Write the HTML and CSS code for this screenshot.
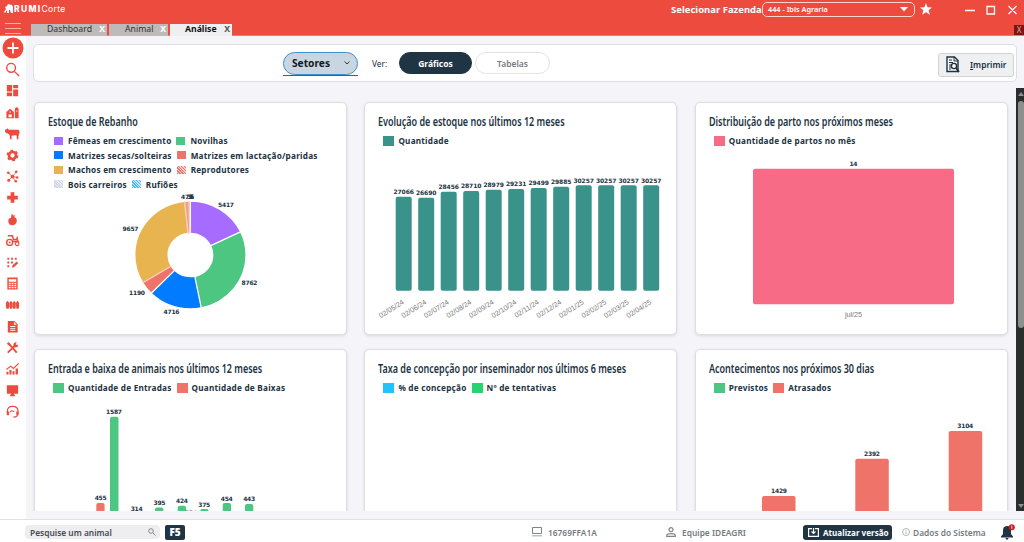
FILE: index.html
```html
<!DOCTYPE html>
<html lang="pt-BR">
<head>
	<meta charset="utf-8">
	<title>Rumi Corte - Análise</title>
	<link rel="stylesheet" href="styles.css">
</head>
<body>
<header class="topbar">
	<div class="titlebar">
		<div class="brand">
			<svg width="10" height="9" viewBox="0 0 10 9"><path d="M0 8L2 5 1 3 3 2 4 0 8 1 9 3 9 9 7 9 6 6 5 6 5 9 3 9 3 6 1 9Z" fill="#fff"/></svg>
			<b>RUMI</b><span>Corte</span>
		</div>
		<div class="farm">
			<b>Selecionar Fazenda</b>
			<div class="farm-select"><span>444 - Ibis Agraria</span><svg width="8" height="5"><path d="M0 0H8L4 4.500Z" fill="#fff"/></svg></div>
			<svg width="12" height="12" viewBox="0 0 12 12"><path d="M6 0L7.600 4.200 12 4.500 8.600 7.300 9.800 11.700 6 9.200 2.200 11.700 3.400 7.300 0 4.500 4.400 4.200Z" fill="#fff"/></svg>
		</div>
		<svg class="window-buttons" width="54" height="12" viewBox="0 0 54 12" fill="none" stroke="#fff" stroke-width="1.300"><path d="M0 6.500H10M22 2.500h7.500v7.500H22ZM43.500 2l8 8M51.500 2l-8 8"/></svg>
	</div>
	<div class="tabbar">
		<svg class="burger" width="16" height="12" viewBox="0 0 16 12" stroke="#ffb0a6" stroke-width="1"><path d="M0 .5H16M0 5.500H16M0 10.500H16"/></svg>
		<div class="tab tab-dash"><span>Dashboard</span><i>X</i></div>
		<div class="tab tab-animal"><span>Animal</span><i>X</i></div>
		<div class="tab tab-active"><span>Análise</span><i>X</i></div>
		<div class="close-all">X</div>
	</div>
</header>

<div class="main">
	<nav class="sidebar">
		<svg class="add" viewBox="0 0 22 22"><circle cx="11" cy="11" r="10.500"/><path d="M11 5.500v11M5.500 11h11" stroke="#fff" stroke-width="1.800"/></svg>
		<svg viewBox="0 0 16 16" class="line"><circle cx="6.500" cy="6.200" r="4.700"/><path d="M10 10l5 5"/></svg>
		<svg viewBox="0 0 16 16"><path d="M2 2h5.500v7H2zM8.700 2h5.300v3.500H8.700zM2 10.200h5.500V14H2zM8.700 6.800h5.300V14H8.700z"/></svg>
		<!-- barn -->
		<svg viewBox="0 0 16 16"><path fill-rule="evenodd" d="M1.500 7.500L5.500 4 9.500 7.500V14H1.500ZM3.800 10h3.400v3H3.800ZM4.700 7h1.600v1H4.700ZM10.500 4q2-3 4 0V14H10.500ZM11.800 6v1h1.500V6Z"/></svg>
		<!-- cow -->
		<svg viewBox="0 0 16 16"><path d="M0 4L1.500 3.500 2.500 2.500 4 4H14.500Q16 5 15.700 9L15 7 14.800 10 14.300 10.500V14H12.500V10.500L11 9.800 7 10.300V14H5.200V10.500L4 8.500 1.500 7.500 0 6Z"/></svg>
		<!-- gear -->
		<svg viewBox="0 0 16 16"><circle cx="8" cy="8" r="3.700" fill="none" stroke="#ed4b3e" stroke-width="2.800"/><circle cx="8" cy="8" r="5.400" fill="none" stroke="#ed4b3e" stroke-width="1.700" stroke-dasharray="2.900 2.755"/></svg>
		<!-- links -->
		<svg viewBox="0 0 16 16"><path d="M8 8L3.500 4M8 8l4-5M8 8l5 1M8 8l3 5M8 8l-4 4" stroke="#ed4b3e" stroke-width=".8"/><circle cx="8" cy="8" r="2"/><circle cx="3.500" cy="4" r="1.400"/><circle cx="12" cy="3" r="1.400"/><circle cx="13" cy="9" r="1.300"/><circle cx="11.500" cy="13" r="1.400"/><circle cx="4" cy="12" r="1.600"/></svg>
		<svg viewBox="0 0 16 16"><path d="M6 2.500h4v3.500h3.700v4H10v3.500H6V10H2.300V6H6z"/></svg>
		<svg viewBox="0 0 16 16"><path d="M7 2h1l.5 2 2-1-.5 2.500q3 1 2.500 4.500-1 4-4.700 4-4 0-4.300-4.500Q3.500 6.500 6.500 6Z"/></svg>
		<!-- tractor -->
		<svg viewBox="0 0 16 16"><path d="M3 3h5l1 4h4V4M13 7l1 2H7" fill="none" stroke="#ed4b3e" stroke-width="1.600"/><circle cx="5" cy="10" r="3.200" fill="#fff" stroke="#ed4b3e" stroke-width="1.500"/><circle cx="5" cy="10" r="1"/><circle cx="13" cy="11.500" r="1.900" fill="#fff" stroke="#ed4b3e" stroke-width="1.300"/></svg>
		<svg viewBox="0 0 16 16"><path d="M2.500 3h2v2h-2zM6.500 3h2v2h-2zM10.500 3h2v2h-2zM2.500 7h2v2h-2zM6.500 7h2v2h-2zM2.500 11h2v2h-2zM7.500 13.500l.5-2.500 4.500-4 1.500 1.800-4.500 4.200z"/></svg>
		<svg viewBox="0 0 16 16"><path fill-rule="evenodd" d="M2.500 1.500h11v13h-11zM4 3.500V6h8V3.500zM4 7.300v1.400h2V7.300zM7 7.300v1.400h2V7.300zM10 7.300v1.400h2V7.300zM4 9.500v1.400h2V9.500zM7 9.500v1.400h2V9.500zM10 9.500v1.400h2V9.500zM4 11.700v1.400h2v-1.400zM7 11.700v1.400h2v-1.400zM10 11.700v1.400h2v-1.400z"/></svg>
		<!-- herd -->
		<svg viewBox="0 0 16 16"><path d="M1 6L2.700 4 4.400 6V10.500L3.900 12.500H1.600L1 10.500zM4.700 6L6.400 4 8 6V10.500L7.500 12.500H5.300L4.700 10.500zM8.300 6L9.900 4 11.500 6V10.500L11 12.500H8.800L8.300 10.500zM11.800 6L13.400 4 15 6V10.500L14.500 12.500H12.300L11.800 10.500z"/></svg>
		<svg viewBox="0 0 16 16"><path fill-rule="evenodd" d="M3 2H10l3.500 3.500V14.500H3zM5.500 7.500v1h5.500v-1zM5.500 9.500v1h5.500v-1zM5.500 11.500v1h5.500v-1zM9.500 3v3h3z"/></svg>
		<!-- tools -->
		<svg viewBox="0 0 16 16"><path d="M3 13.500L10.500 6M3 3.500l3 2.500 6.500 7.500" stroke="#ed4b3e" stroke-width="2" fill="none"/><path d="M9 6q-.5-3.500 3.500-3.500L11.500 4.500 13 5.500 14 4.500q.5 4-4 3.500ZM2 4l2-2 2 3-1 1Z"/></svg>
		<svg viewBox="0 0 16 16"><path d="M1.500 11.500h2.200v3H1.500zM4.700 9.500h2.200v5H4.700zM8 11h2.200v3.500H8zM11.300 8h2.500v6.500h-2.500z"/><path d="M1.500 9L6 5.500l3 2.500L14.500 2.500" fill="none" stroke="#ed4b3e" stroke-width="1.200"/></svg>
		<svg viewBox="0 0 16 16"><path d="M2 2.500h12v9H9.500l1.500 2.500H5l1.500-2.500H2z"/></svg>
		<!-- support -->
		<svg viewBox="0 0 16 16"><path d="M2.500 11V8q0-5.500 5.700-5.500T14 8v3M13.500 11q0 3-4.500 3" fill="none" stroke="#ed4b3e" stroke-width="1.300"/><path d="M2 8h2.300v4H2zM12 8h2.300v4H12zM5 8q3-3 5.500.5Q8 9 7.500 7.500 7 9 5 9z"/></svg>
	</nav>

	<div class="content">
		<div class="toolbar">
			<div class="filters">
				<div class="sectors"><button class="sectors-button">Setores<svg width="6" height="4" fill="none" stroke="#26394a"><path d="M.5 .5L3 3 5.500 .5"/></svg></button></div>
				<label>Ver:</label>
				<button class="pill pill-on">Gráficos</button>
				<button class="pill">Tabelas</button>
			</div>
			<button class="print"><svg width="14" height="17" viewBox="0 0 14 17"><path d="M1 1H8.500L12 4.500V15.500H1Z" fill="#f4f6f7" stroke="#20323f" stroke-width="1.400"/><path d="M8 1V5H12M3 4h3M3 6.500h4M3 9h2M3 11h2M3 13h2" fill="none" stroke="#20323f"/><circle cx="8" cy="10" r="2.600" fill="#fff" stroke="#20323f" stroke-width="1.400"/><path d="M10 12l3 4" stroke="#20323f" stroke-width="1.800"/></svg><span><u>I</u>mprimir</span></button>
		</div>

		<div class="board">
			<div class="cards">
				<section class="card">
					<h2>Estoque de Rebanho</h2>
					<div class="legend legend-small">
						<div><span class="purple">Fêmeas em crescimento</span><span class="green">Novilhas</span></div>
						<div><span class="blue">Matrizes secas/solteiras</span><span class="red">Matrizes em lactação/paridas</span></div>
						<div><span class="amber">Machos em crescimento</span><span class="hatch-red">Reprodutores</span></div>
						<div><span class="hatch-gray">Bois carreiros</span><span class="hatch-blue">Rufiões</span></div>
					</div>
					<svg class="chart" viewBox="35 191 311 143" width="311" height="143">
						<!-- each slice is a dash of the ring, 30257 animals in all -->
						<g transform="translate(190.400 255) scale(1 .97)">
							<g transform="rotate(-90)" fill="none" stroke-width="32">
								<circle r="39" pathLength="30257" stroke="#a66cff" stroke-dasharray="5417 30257"/>
								<circle r="39" pathLength="30257" stroke="#4dc681" stroke-dasharray="8762 30257" stroke-dashoffset="-5417"/>
								<circle r="39" pathLength="30257" stroke="#017bff" stroke-dasharray="4716 30257" stroke-dashoffset="-14179"/>
								<circle r="39" pathLength="30257" stroke="#f0736a" stroke-dasharray="1190 30257" stroke-dashoffset="-18895"/>
								<circle r="39" pathLength="30257" stroke="#e8b450" stroke-dasharray="9657 30257" stroke-dashoffset="-20085"/>
								<circle r="39" pathLength="30257" stroke="#eea18f" stroke-dasharray="515 30257" stroke-dashoffset="-29742"/>
							</g>
							<g stroke="#fff" stroke-width="1.300">
								<path d="M0-22V-56"/>
								<path d="M0-22V-56" transform="rotate(64.500)"/>
								<path d="M0-22V-56" transform="rotate(168.700)"/>
								<path d="M0-22V-56" transform="rotate(224.800)"/>
							</g>
							<g stroke="#fbd0c5" stroke-width="1.300">
								<path d="M0-22V-56" transform="rotate(239)"/>
								<path d="M0-22V-56" transform="rotate(353.900)"/>
								<path d="M0-22V-56" transform="rotate(358.600)"/>
							</g>
						</g>
						<g class="value">
							<text x="226" y="206.500" textLength="16">5417</text>
							<text x="249.500" y="284.500" textLength="16">8762</text>
							<text x="171.500" y="314" textLength="16">4716</text>
							<text x="137" y="295" textLength="16">1190</text>
							<text x="130.500" y="230.500" textLength="16">9657</text>
							<text x="187" y="198.500" textLength="12">473</text>
							<text x="190.500" y="198.500" textLength="7">35</text>
							<text x="192" y="198.500" textLength="4">6</text>
						</g>
					</svg>
				</section>

				<section class="card">
					<h2>Evolução de estoque nos últimos 12 meses</h2>
					<div class="legend"><div><span class="teal">Quantidade</span></div></div>
					<svg class="chart" viewBox="365 148 311 186" width="311" height="186">
						<g fill="#3a938b">
							<rect x="395.700" y="196.700" width="16" height="94" rx="2"/>
							<rect x="418.200" y="197.700" width="16" height="93" rx="2"/>
							<rect x="440.700" y="191.700" width="16" height="99" rx="2"/>
							<rect x="463.200" y="191" width="16" height="99.700" rx="2"/>
							<rect x="485.700" y="189.700" width="16" height="101" rx="2"/>
							<rect x="508.200" y="189" width="16" height="101.700" rx="2"/>
							<rect x="530.700" y="188" width="16" height="102.700" rx="2"/>
							<rect x="553.200" y="186.700" width="16" height="104" rx="2"/>
							<rect x="575.700" y="185.300" width="16" height="105.400" rx="2"/>
							<rect x="598.200" y="185.300" width="16" height="105.400" rx="2"/>
							<rect x="620.700" y="185.300" width="16" height="105.400" rx="2"/>
							<rect x="643.200" y="185.300" width="16" height="105.400" rx="2"/>
						</g>
						<g class="value">
							<text x="403.700" y="193.500" textLength="20.500">27066</text>
							<text x="426.200" y="194.500" textLength="20.500">26690</text>
							<text x="448.700" y="188.500" textLength="20.500">28456</text>
							<text x="471.200" y="187.500" textLength="20.500">28710</text>
							<text x="493.700" y="187" textLength="20.500">28979</text>
							<text x="516.200" y="186" textLength="20.500">29231</text>
							<text x="538.700" y="185.300" textLength="20.500">29499</text>
							<text x="561.200" y="184" textLength="20.500">29885</text>
							<text x="583.700" y="182.500" textLength="20.500">30257</text>
							<text x="606.200" y="182.500" textLength="20.500">30257</text>
							<text x="628.700" y="182.500" textLength="20.500">30257</text>
							<text x="651.200" y="182.500" textLength="20.500">30257</text>
						</g>
						<g class="tick tick-date">
							<text transform="translate(404.500 303.500) rotate(-32)">02/05/24</text>
							<text transform="translate(427 303.500) rotate(-32)">02/06/24</text>
							<text transform="translate(449.500 303.500) rotate(-32)">02/07/24</text>
							<text transform="translate(472 303.500) rotate(-32)">02/08/24</text>
							<text transform="translate(494.500 303.500) rotate(-32)">02/09/24</text>
							<text transform="translate(517 303.500) rotate(-32)">02/10/24</text>
							<text transform="translate(539.500 303.500) rotate(-32)">02/11/24</text>
							<text transform="translate(562 303.500) rotate(-32)">02/12/24</text>
							<text transform="translate(584.500 303.500) rotate(-32)">02/01/25</text>
							<text transform="translate(607 303.500) rotate(-32)">02/02/25</text>
							<text transform="translate(629.500 303.500) rotate(-32)">02/03/25</text>
							<text transform="translate(652 303.500) rotate(-32)">02/04/25</text>
						</g>
					</svg>
				</section>

				<section class="card">
					<h2>Distribuição de parto nos próximos meses</h2>
					<div class="legend"><div><span class="pink">Quantidade de partos no mês</span></div></div>
					<svg class="chart" viewBox="696 148 311 186" width="311" height="186">
						<rect x="753" y="168.700" width="201" height="135.500" rx="2" fill="#f86b86"/>
						<text class="value" x="853.500" y="166" textLength="8">14</text>
						<text class="tick" x="853.500" y="317">jul/25</text>
					</svg>
				</section>

				<section class="card">
					<h2>Entrada e baixa de animais nos últimos 12 meses</h2>
					<div class="legend"><div><span class="green">Quantidade de Entradas</span><span class="red">Quantidade de Baixas</span></div></div>
					<svg class="chart" viewBox="35 395 311 186" width="311" height="186">
						<rect x="96.300" y="503" width="8.300" height="50" rx="2" fill="#f0736a"/>
						<g fill="#4dc681">
							<rect x="110" y="416.700" width="8.500" height="140" rx="2"/>
							<rect x="155" y="507.500" width="8.300" height="50" rx="2"/>
							<rect x="177.700" y="505.700" width="8.300" height="50" rx="2"/>
							<rect x="200.200" y="509" width="8.300" height="50" rx="2"/>
							<rect x="222.700" y="503" width="8.300" height="50" rx="2"/>
							<rect x="245" y="504" width="8.300" height="50" rx="2"/>
						</g>
						<g class="value">
							<text x="100.700" y="500" textLength="12">455</text>
							<text x="114" y="413.500" textLength="16">1587</text>
							<text x="136.700" y="511" textLength="12">314</text>
							<text x="159.500" y="505" textLength="12">395</text>
							<text x="182" y="503" textLength="12">424</text>
							<text x="191" y="515" textLength="12">334</text>
							<text x="204.300" y="506.500" textLength="12">375</text>
							<text x="226.800" y="500.500" textLength="12">454</text>
							<text x="249.200" y="501.200" textLength="12">443</text>
						</g>
					</svg>
				</section>

				<section class="card">
					<h2>Taxa de concepção por inseminador nos últimos 6 meses</h2>
					<div class="legend"><div><span class="cyan">% de concepção</span><span class="lime">Nº de tentativas</span></div></div>
				</section>

				<section class="card">
					<h2>Acontecimentos nos próximos 30 dias</h2>
					<div class="legend"><div><span class="green">Previstos</span><span class="red">Atrasados</span></div></div>
					<svg class="chart" viewBox="696 395 311 186" width="311" height="186">
						<g fill="#f0736a">
							<rect x="762" y="496" width="33.500" height="60" rx="2"/>
							<rect x="855.300" y="458.700" width="33.500" height="90" rx="2"/>
							<rect x="948.700" y="431" width="33.500" height="120" rx="2"/>
						</g>
						<g class="value">
							<text x="779" y="492.800" textLength="16">1429</text>
							<text x="872" y="455.500" textLength="16">2392</text>
							<text x="965.300" y="428" textLength="16">3104</text>
						</g>
					</svg>
				</section>
			</div>
			<div class="scrollbar">
				<svg width="8" height="13"><path d="M2 8L5 4 8 8Z" fill="#8d8f90"/></svg>
				<div class="thumb"></div>
				<svg width="8" height="10"><path d="M2 3H8L5 7Z" fill="#8d8f90"/></svg>
			</div>
		</div>
	</div>
</div>

<footer class="statusbar">
	<div class="search"><span>Pesquise um animal</span><svg width="8" height="8" fill="none" stroke="#888"><circle cx="3" cy="3" r="2.300"/><path d="M5 5L7.500 7.500"/></svg></div>
	<b class="key">F5</b>
	<div class="machine"><svg width="10" height="10" fill="none" stroke="#7c858b"><path d="M.5 .5H9.500V6.500H.5ZM1 9.500V8M3 9.500V8M5 9.500V8M7 9.500V8M9 9.500V8"/></svg><span>16769FFA1A</span></div>
	<div class="user"><svg width="10" height="10" fill="none" stroke="#7c858b" stroke-width="1.200"><circle cx="5" cy="2.700" r="2"/><path d="M.7 9.300V8.500Q1 6.700 5 6.700T9.300 8.500V9.300Z"/></svg><span>Equipe IDEAGRI</span></div>
	<div class="update"><svg width="11" height="9" fill="none" stroke="#fff" stroke-width="1.200"><path d="M4 .6H.6V8.400H10.400V.6H7M5.500 0V5.500M3.500 3.500L5.500 5.500 7.500 3.500"/></svg><span>Atualizar versão</span></div>
	<div class="system"><svg width="8" height="8" fill="none" stroke="#9aa0a4" stroke-width=".8"><circle cx="4" cy="4" r="3.500"/><path d="M4 2V2.800M4 3.500V6"/></svg><span>Dados do Sistema</span></div>
	<svg class="bell" width="14" height="16" viewBox="0 0 14 16"><path d="M6 2Q10 2 10 6V10L12 12.500V13.500H0V12.500L2 10V6Q2 3 4.500 2.300Z" fill="#1f3544"/><path d="M4.500 14h3q0 1.700-1.500 1.700T4.500 14" fill="#1f3544"/><circle cx="10.800" cy="3.200" r="3" fill="#cf1b1b"/><path d="M10.800 1.500V4.800" stroke="#fff" stroke-width=".8"/></svg>
</footer>
</body>
</html>
```
FILE: styles.css
```css
* { box-sizing: border-box; }
body { margin: 0; height: 542px; overflow: hidden; display: flex; flex-direction: column; background: #f5f4f9; font-family: "Noto Sans", "Open Sans", sans-serif; color: #20323f; }
svg { display: block; flex: none; }
button { font: inherit; color: inherit; padding: 0; }

/* header */
.topbar { height: 36px; flex: none; background: #ed4b3e; border-bottom: 1px solid #dc7f78; color: #fff; }
.titlebar { height: 23px; display: flex; align-items: flex-start; }
.brand { width: 671px; display: flex; align-items: center; height: 17px; padding-left: 4px; font-size: 8.6px; }
.brand b { font-family: Inter, sans-serif; font-weight: 800; font-size: 8.5px; letter-spacing: 1.3px; }
.brand span { font-family: Inter, sans-serif; letter-spacing: .3px; }
.farm { display: flex; align-items: center; height: 18px; font-size: 9.5px; white-space: nowrap; }
.farm b { width: 91px; }
.farm-select { width: 153px; height: 15px; border: 1px solid #ffd6d0; border-radius: 5px; margin-right: 5px; padding: 0 6px 0 5px; display: flex; align-items: center; justify-content: space-between; font-size: 7.3px; font-weight: 600; }
.window-buttons { margin: 4px 0 0 33px; }
.tabbar { height: 12px; display: flex; }
.burger { margin: 0 10px 0 5px; }
.tab { height: 12px; margin-top: 1px; background: #bdbab9; color: #333; font-size: 8.7px; line-height: 11px; display: flex; justify-content: space-between; padding: 0 2px 0 16px; margin-right: 2px; }
.tab i { font-style: normal; font-weight: bold; color: #fff; }
.tab-dash { width: 76px; }
.tab-animal { width: 59px; }
.tab-active { width: 62px; background: #efeff1; color: #111; font-weight: bold; padding-left: 15px; }
.tab-active i { color: #555; }
.close-all { margin: 2px 0 0 auto; width: 10px; height: 10px; background: #7b1515; color: #e4a49e; font-size: 8px; line-height: 10px; text-align: center; }

.main { display: flex; height: 483px; flex: none; }

/* sidebar */
.sidebar { width: 26px; background: #fff; display: flex; flex-direction: column; align-items: center; padding-top: 1px; fill: #ed4b3e; }
.sidebar svg { width: 15px; height: 15px; margin: 0 1px 6.4px 0; }
.sidebar .add { width: 22px; height: 22px; margin-bottom: 3px; }
.sidebar .line { fill: none; stroke: #ed4b3e; stroke-width: 1.5; }

.content { flex: 1; min-width: 0; padding-top: 8px; }

/* toolbar */
.toolbar { width: 984px; height: 38px; margin-left: 7px; background: #fff; border: 1px solid #dcdfe3; border-radius: 5px; display: flex; justify-content: space-between; align-items: center; padding: 0 2px 0 249px; }
.filters { display: flex; align-items: center; }
.sectors { border-bottom: 1px solid #1d7a4b; padding-bottom: 0; margin-top: 1px; }
.sectors-button { width: 75px; height: 23px; border: 1.8px solid #3b93cf; border-radius: 12px; background: #c9d5e0; display: flex; align-items: center; justify-content: space-between; padding: 0 7px 0 8px; font-size: 10.2px; font-weight: bold; color: #111b22; }
.filters label { width: 41px; padding-left: 14px; font-size: 8.3px; }
.pill { width: 75px; height: 22px; border: 1px solid #e2e3e8; border-radius: 11px; background: #fff; color: #777b80; font-size: 8.5px; font-weight: 600; margin-right: 3px; }
.pill-on { width: 73px; background: #1f3544; border-color: #1f3544; color: #fff; font-weight: bold; margin-right: 3px; }
.print { width: 76px; height: 24px; margin-top: 3px; background: #eef0f2; border: 1px solid #d0d4d8; border-radius: 3px; display: flex; align-items: center; padding-left: 7px; gap: 10px; font-size: 8.4px; font-weight: 600; }

/* cards */
.board { display: flex; justify-content: space-between; height: 423px; margin-top: 6px; }
.cards { height: 423px; overflow: hidden; display: grid; grid-template-columns: 313px 313px 313px; grid-auto-rows: 233px; justify-content: start; column-gap: 17.4px; row-gap: 14px; padding: 14px 0 0 8px; width: 990px; flex: none; }
.card { background: #fff; border: 1px solid #dddde3; border-radius: 5px; box-shadow: 0 1px 3px rgba(60, 60, 90, .15); overflow: hidden; }
.card h2 { margin: 0; padding: 10px 0 0 13px; height: 30px; font-size: 12px; line-height: 18px; font-weight: 600; white-space: nowrap; transform: scaleX(.749); transform-origin: 13px 0; }
.legend { padding-left: 18px; font-size: 8.2px; font-weight: bold; letter-spacing: .23px; height: 15px; }
.legend div { display: flex; height: 14.5px; padding-top: 1px; align-items: center; gap: 5px; white-space: nowrap; }
.legend span { display: flex; align-items: center; gap: 4px; line-height: 13px; }
.legend span::before { content: ""; width: 11px; height: 10px; background: var(--c); }
.legend-small { height: 58px; padding-left: 19px; }
.legend-small span { gap: 5px; }
.legend-small span::before { width: 9px; height: 8px; }
.purple { --c: #a66cff; }
.green { --c: #4dc681; }
.blue { --c: #017bff; }
.red { --c: #f0736a; }
.amber { --c: #e8b450; }
.teal { --c: #3a938b; }
.pink { --c: #f86b86; }
.cyan { --c: #20c4fb; }
.lime { --c: #24d56f; }
.hatch-red { --c: repeating-linear-gradient(45deg, #f0736a 0 1px, #fbd0c9 1px 2px); }
.hatch-gray { --c: repeating-linear-gradient(45deg, #cfd6e2 0 1px, #e8ebf2 1px 2px); }
.hatch-blue { --c: repeating-linear-gradient(45deg, #4db8f5 0 1px, #c6e8fc 1px 2px); }

.value { font-family: "DejaVu Sans", sans-serif; font-size: 6px; font-weight: bold; fill: #20323f; text-anchor: middle; }
.tick { font-family: "Liberation Sans", sans-serif; font-size: 7.2px; fill: #777; text-anchor: middle; }
.tick-date { text-anchor: end; }

.scrollbar { width: 8px; flex: none; background: #2b2e2f; display: flex; flex-direction: column; }
.thumb { width: 6px; height: 227px; margin-left: 2px; border-radius: 3px; background: #8d8f90; margin-bottom: auto; }

/* status bar */
.statusbar { height: 23px; flex: none; background: #fff; border-top: 1px solid #e0e0e6; display: flex; align-items: center; font-size: 8.4px; font-weight: 600; color: #747b80; white-space: nowrap; padding-top: 2px; }
.statusbar > div { display: flex; align-items: center; }
.statusbar .search { width: 135px; height: 14px; margin-left: 25px; padding: 0 4px 0 5px; border-radius: 4px; background: #eeeef0; justify-content: space-between; color: #454b50; }
.key { width: 20px; height: 15px; margin-left: 5px; border-radius: 2px; background: #1f3544; color: #fff; font-size: 10px; line-height: 15px; text-align: center; }
.machine { width: 134px; margin-left: 347px; gap: 6px; }
.user { width: 137px; gap: 6px; }
.statusbar .update { width: 89px; height: 15px; padding-left: 5px; gap: 4px; background: #1f3544; color: #fff; border-radius: 3px; font-size: 8.1px; font-weight: bold; }
.system { width: 90px; margin-left: 10px; gap: 3px; }
.bell { margin-left: 9px; }
```
